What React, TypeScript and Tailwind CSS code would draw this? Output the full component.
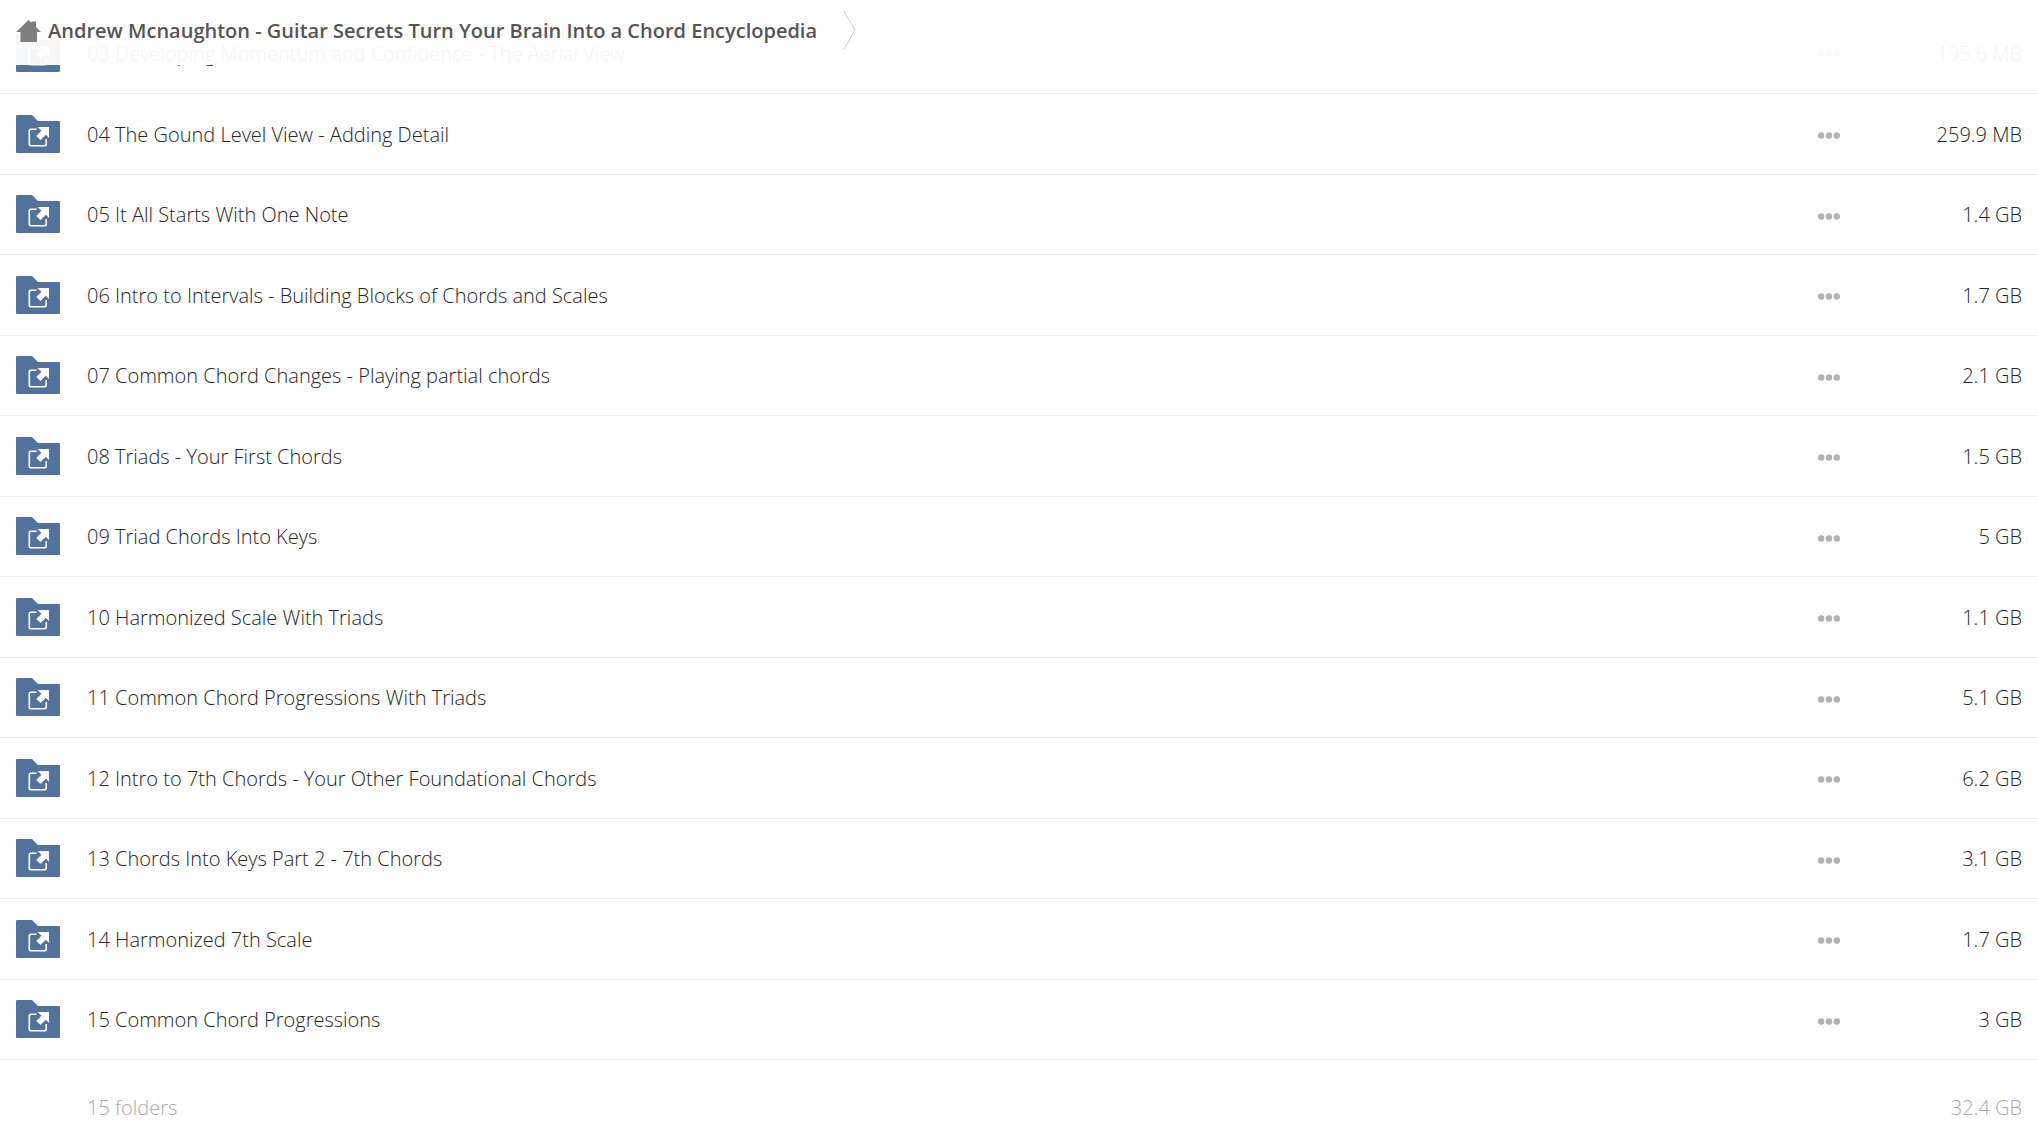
const folders = [
  { name: "03 Developing Momentum and Confidence - The Aerial View", size: "195.6 MB" },
  { name: "04 The Gound Level View - Adding Detail", size: "259.9 MB" },
  { name: "05 It All Starts With One Note", size: "1.4 GB" },
  { name: "06 Intro to Intervals - Building Blocks of Chords and Scales", size: "1.7 GB" },
  { name: "07 Common Chord Changes - Playing partial chords", size: "2.1 GB" },
  { name: "08 Triads - Your First Chords", size: "1.5 GB" },
  { name: "09 Triad Chords Into Keys", size: "5 GB" },
  { name: "10 Harmonized Scale With Triads", size: "1.1 GB" },
  { name: "11 Common Chord Progressions With Triads", size: "5.1 GB" },
  { name: "12 Intro to 7th Chords - Your Other Foundational Chords", size: "6.2 GB" },
  { name: "13 Chords Into Keys Part 2 - 7th Chords", size: "3.1 GB" },
  { name: "14 Harmonized 7th Scale", size: "1.7 GB" },
  { name: "15 Common Chord Progressions", size: "3 GB" },
];

function HomeIcon() {
  return (
    <svg width="25" height="22" viewBox="0 0 25 22" fill="#7f7f7f" aria-hidden="true">
      <path d="M12.5 0 L15.500 2.800 V1.500 H20 V7 L25 12 H21 V22 H4.500 V12 H0 Z" />
    </svg>
  );
}

function FolderIcon() {
  return (
    <svg width="44" height="38" viewBox="0 0 44 38" className="block" aria-hidden="true">
      <path d="M1 0 H16 L22 6 H43 Q44 6 44 7 V37 Q44 38 43 38 H1 Q0 38 0 37 V1 Q0 0 1 0 Z" fill="#54739c" />
      <path
        d="M20.500 14.300 H15 Q13.300 14.300 13.300 16 V29 Q13.300 30.700 15 30.700 H28.500 Q30.200 30.700 30.200 29 V24"
        fill="none"
        stroke="#fff"
        strokeWidth="1.6"
      />
      <path d="M21.500 12 H33 V23 L29.800 19.800 L24.500 25 L20.300 21 L25.500 15.800 Z" fill="#fff" />
    </svg>
  );
}

function DotsIcon() {
  return (
    <svg width="22" height="7" viewBox="0 0 22 7" fill="#b2b2b2" className="block" aria-hidden="true">
      <circle cx="3.200" cy="3.500" r="3.200" />
      <circle cx="11" cy="3.500" r="3.200" />
      <circle cx="18.800" cy="3.500" r="3.200" />
    </svg>
  );
}

function Breadcrumbs() {
  return (
    <header className="absolute inset-x-0 top-0 flex h-[65px] items-start bg-[#fefefe]/95 pl-4">
      <nav aria-label="Breadcrumb" className="flex h-[62px] items-center">
        <a href="#" className="flex items-center gap-[7px] text-xl font-semibold text-[#555]">
          <HomeIcon />
          Andrew Mcnaughton - Guitar Secrets Turn Your Brain Into a Chord Encyclopedia
        </a>
        <svg width="13" height="40" viewBox="0 0 13 40" className="ml-[26px]" aria-hidden="true">
          <path d="M1 0 L12 19 L1 38" fill="none" stroke="#ccc" />
        </svg>
      </nav>
    </header>
  );
}

export default function App() {
  return (
    <div className="relative min-h-screen overflow-hidden bg-[#fefefe] font-['Open_Sans',sans-serif] text-xl font-light text-neutral-800">
      <main className="pt-[13px]">
        <table className="w-full border-collapse">
          <tbody>
            {folders.map((folder) => (
              <tr key={folder.name} className="h-[81px] border-b border-[#ececec] odd:h-20">
                <td className="w-[87px] p-0 pl-4">
                  <FolderIcon />
                </td>
                <td className="p-0 pt-[2px]">
                  <a href="#">{folder.name}</a>
                </td>
                <td className="w-[69px] p-0">
                  <button type="button" aria-label={`Options for ${folder.name}`} className="block pt-1">
                    <DotsIcon />
                  </button>
                </td>
                <td className="w-[150px] p-0 pt-[2px] pr-[15px] text-right">{folder.size}</td>
              </tr>
            ))}
          </tbody>
          <tfoot>
            <tr className="h-24 text-[#aaa]">
              <td />
              <td className="p-0 pt-[2px]">15 folders</td>
              <td />
              <td className="p-0 pt-[2px] pr-[15px] text-right">32.4 GB</td>
            </tr>
          </tfoot>
        </table>
      </main>
      <Breadcrumbs />
    </div>
  );
}
